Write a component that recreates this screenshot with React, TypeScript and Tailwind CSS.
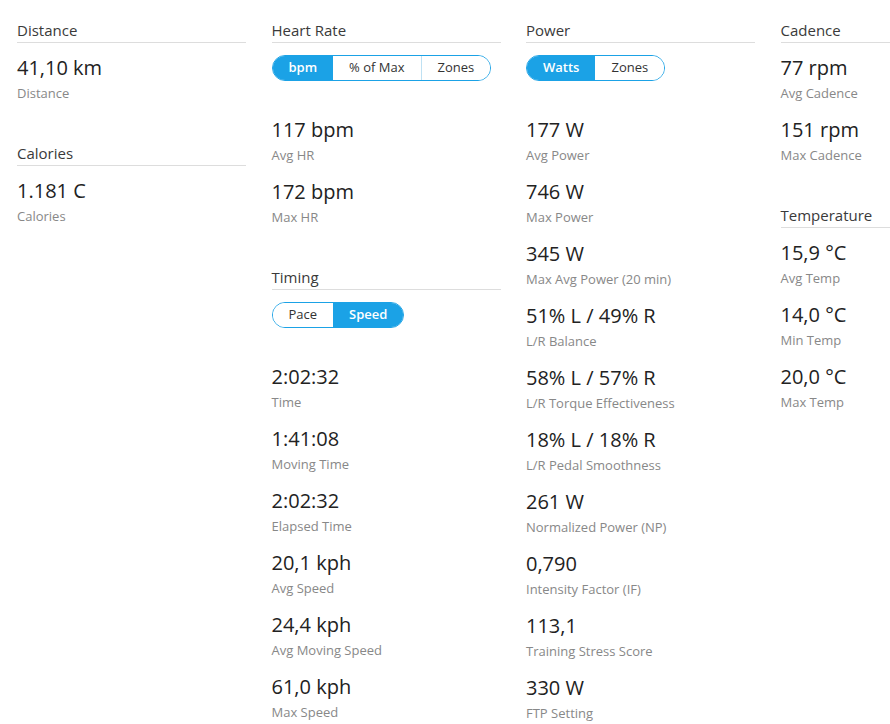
import { useState } from "react"

type Stat = { value: string; label: string }
type Section = {
	title: string
	toggle?: { options: string[]; active: number }
	stats: Stat[]
}

const columns: Section[][] = [
	[
		{ title: "Distance", stats: [{ value: "41,10 km", label: "Distance" }] },
		{ title: "Calories", stats: [{ value: "1.181 C", label: "Calories" }] },
	],
	[
		{
			title: "Heart Rate",
			toggle: { options: ["bpm", "% of Max", "Zones"], active: 0 },
			stats: [
				{ value: "117 bpm", label: "Avg HR" },
				{ value: "172 bpm", label: "Max HR" },
			],
		},
		{
			title: "Timing",
			toggle: { options: ["Pace", "Speed"], active: 1 },
			stats: [
				{ value: "2:02:32", label: "Time" },
				{ value: "1:41:08", label: "Moving Time" },
				{ value: "2:02:32", label: "Elapsed Time" },
				{ value: "20,1 kph", label: "Avg Speed" },
				{ value: "24,4 kph", label: "Avg Moving Speed" },
				{ value: "61,0 kph", label: "Max Speed" },
			],
		},
	],
	[
		{
			title: "Power",
			toggle: { options: ["Watts", "Zones"], active: 0 },
			stats: [
				{ value: "177 W", label: "Avg Power" },
				{ value: "746 W", label: "Max Power" },
				{ value: "345 W", label: "Max Avg Power (20 min)" },
				{ value: "51% L / 49% R", label: "L/R Balance" },
				{ value: "58% L / 57% R", label: "L/R Torque Effectiveness" },
				{ value: "18% L / 18% R", label: "L/R Pedal Smoothness" },
				{ value: "261 W", label: "Normalized Power (NP)" },
				{ value: "0,790", label: "Intensity Factor (IF)" },
				{ value: "113,1", label: "Training Stress Score" },
				{ value: "330 W", label: "FTP Setting" },
			],
		},
	],
	[
		{
			title: "Cadence",
			stats: [
				{ value: "77 rpm", label: "Avg Cadence" },
				{ value: "151 rpm", label: "Max Cadence" },
			],
		},
		{
			title: "Temperature",
			stats: [
				{ value: "15,9 °C", label: "Avg Temp" },
				{ value: "14,0 °C", label: "Min Temp" },
				{ value: "20,0 °C", label: "Max Temp" },
			],
		},
	],
]

const Toggle = ({ options, initial }: { options: string[]; initial: number }) => {
	const [active, setActive] = useState(initial)
	return (
		<div className="pt-[2px] pb-[34px] flex">
			<div className="flex h-[26px] rounded-full border border-[#1ba2e6] overflow-hidden">
				{options.map((opt, i) => (
					<button
						key={opt}
						onClick={() => setActive(i)}
						className={
							i === active
								? "px-4 text-[13px] font-semibold text-white bg-[#1ba2e6]"
								: i > 0 && i - 1 !== active
									? "px-4 text-[13px] text-[#333] bg-white border-l border-[#bfe1f3]"
									: "px-4 text-[13px] text-[#333] bg-white"
						}
					>
						{opt}
					</button>
				))}
			</div>
		</div>
	)
}

const StatBlock = ({ stat }: { stat: Stat }) => (
	<div className="mb-[12px]">
		<p className="text-[20px] leading-[30px] text-[#222]">{stat.value}</p>
		<p className="text-[13px] leading-[20px] text-[#888]">{stat.label}</p>
	</div>
)

const App = () => {
	return (
		<div
			className="w-[890px] h-[724px] overflow-hidden bg-white pl-[17px] pt-[19px]"
			style={{ fontFamily: '"Open Sans", "Noto Sans", sans-serif' }}
		>
			<div className="grid grid-cols-[229px_229px_229px_229px] gap-x-[25.5px]">
				{columns.map((col, ci) => (
					<div key={ci} className="flex flex-col gap-[27px]">
						{col.map(section => (
							<div key={section.title}>
								<h2 className="text-[15px] leading-[22px] pb-[1px] text-[#3a3a3a] border-b border-[#ddd]">
									{section.title}
								</h2>
								<div className="mt-[10px]">
									{section.toggle && (
										<Toggle options={section.toggle.options} initial={section.toggle.active} />
									)}
									{section.stats.map(stat => (
										<StatBlock key={stat.label} stat={stat} />
									))}
								</div>
							</div>
						))}
					</div>
				))}
			</div>
		</div>
	)
}

export default App
